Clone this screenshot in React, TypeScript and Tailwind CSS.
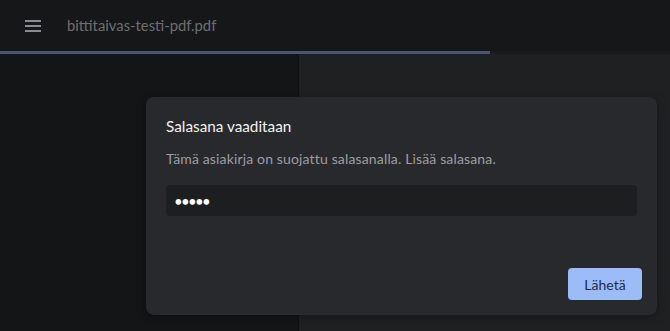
import React, { useState } from 'react';

const App: React.FC = () => {
  const [password, setPassword] = useState<string>('salas');

  return (
    <div className="relative h-[331px] w-[670px] overflow-hidden bg-[#141517] font-['Lato',sans-serif]">
      {/* Top bar */}
      <header className="flex h-[51px] items-center bg-[#161719]">
        <button className="ml-[25px] flex w-4 flex-col gap-[3px]" aria-label="Valikko">
          <span className="h-[2px] w-4 bg-[#8a8b8e]" />
          <span className="h-[2px] w-4 bg-[#8a8b8e]" />
          <span className="h-[2px] w-4 bg-[#8a8b8e]" />
        </button>
        <span className="ml-[26px] text-[14.8px] text-[#6e6f72]">bittitaivas-testi-pdf.pdf</span>
      </header>
      {/* Progress */}
      <div className="h-[3px] bg-[#1a1b1d]">
        <div className="h-full w-[490px] bg-[#4a5670]" />
      </div>
      {/* Panels */}
      <div className="flex h-[277px]">
        <aside className="w-[298px] bg-[#141517]" />
        <main className="flex-1 border-l border-[#111214] bg-[#1f2022]" />
      </div>

      {/* Password dialog */}
      <div className="absolute left-[146px] top-[97px] flex h-[218px] w-[511px] flex-col rounded-lg bg-[#28292c] shadow-[0_2px_10px_rgba(0,0,0,0.35)]">
        <h2 className="ml-5 mt-[18px] text-[15.3px] leading-[22px] text-[#f1f1f2]">Salasana vaaditaan</h2>
        <p className="ml-5 mt-[12px] text-[14px] leading-[20px] tracking-[0.15px] text-[#9c9ea3]">
          Tämä asiakirja on suojattu salasanalla. Lisää salasana.
        </p>
        <input
          type="password"
          value={password}
          onChange={e => setPassword(e.target.value)}
          className="mx-5 mt-[16px] h-[31px] rounded bg-[#1d1e20] px-2 text-[15px] tracking-[-1.7px] text-white outline-none"
        />
        <div className="mt-auto flex justify-end pb-[15px] pr-[15px]">
          <button className="h-8 w-[74px] rounded bg-[#9bbcf7] text-[14px] text-[#1f2b45]">Lähetä</button>
        </div>
      </div>
    </div>
  );
};

export default App;
